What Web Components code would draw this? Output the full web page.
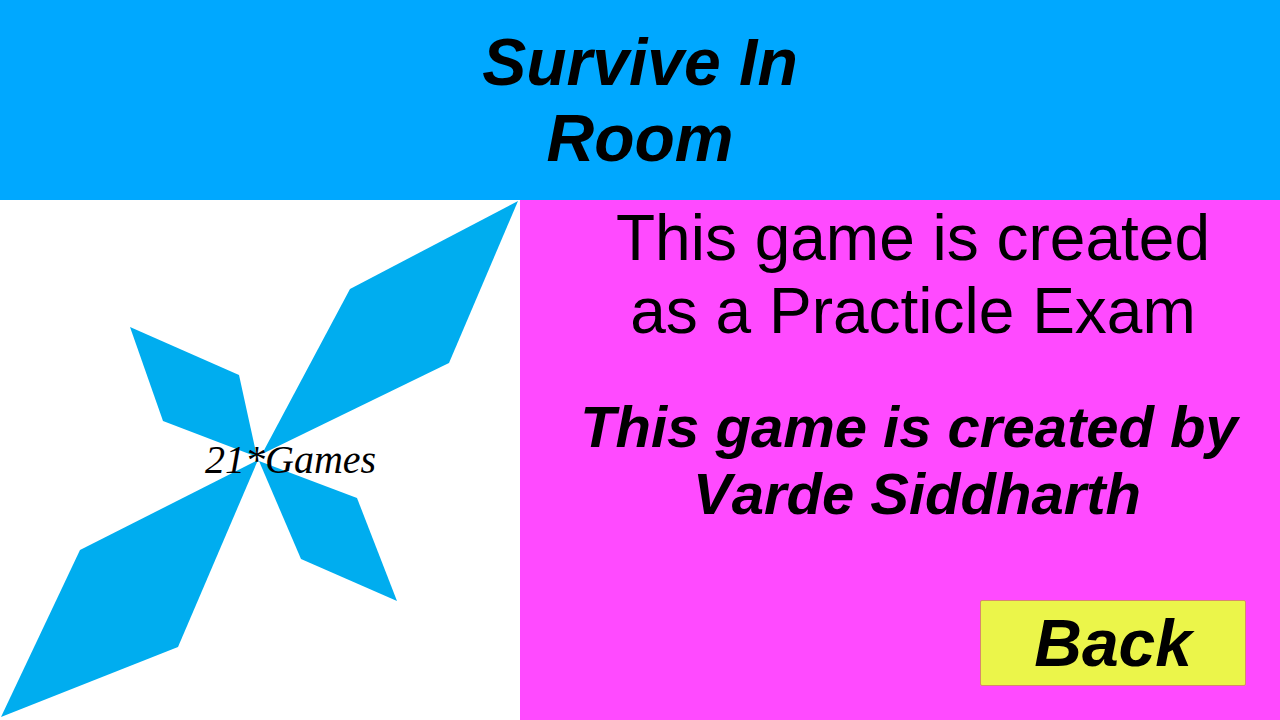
<!DOCTYPE html>
<html lang="en">
<head>
<meta charset="utf-8">
<meta name="viewport" content="width=device-width, initial-scale=1">
<title>Survive In Room</title>
<style>
    body {
        margin: 0;
        background: #ff4aff;
        color: #000;
        font-family: "Liberation Sans", Arial, sans-serif;
        font-kerning: none;
    }
</style>
</head>
<body>
<about-screen>
    <game-header slot="header">Survive In Room</game-header>
    <studio-logo slot="logo"></studio-logo>
    <game-credits slot="credits">
        <span slot="purpose">This game is created as a Practicle Exam</span>
        <span slot="author">This game is created by Varde Siddharth</span>
        <back-button slot="action">Back</back-button>
    </game-credits>
</about-screen>

<script>
function makeTemplate(html) {
    const template = document.createElement("template");
    template.innerHTML = html;
    return template;
}

const screenTemplate = makeTemplate(`
    <style>
    :host {
        display: block;
    }
    main {
        display: grid;
        grid-template-columns: 13fr 19fr;
    }
    </style>
    <slot name="header"></slot>
    <main>
        <slot name="logo"></slot>
        <slot name="credits"></slot>
    </main>
`);

const headerTemplate = makeTemplate(`
    <style>
    :host {
        display: block;
        padding: 24px;
        background: #00a8ff;
    }
    h1 {
        max-width: 400px;
        margin: 0 auto;
        font-size: 66px;
        font-style: italic;
        line-height: 76px;
        text-align: center;
    }
    </style>
    <h1><slot></slot></h1>
`);

const logoTemplate = makeTemplate(`
    <style>
    :host {
        display: block;
        background: #fff;
    }
    svg {
        display: block;
        width: 100%;
    }
    polygon {
        fill: #00adef;
    }
    text {
        font-family: "Lucida Calligraphy", "Liberation Serif", serif;
        font-size: 40px;
        font-style: italic;
    }
    </style>
    <svg viewBox="0 0 520 520" role="img" aria-label="21*Games">
        <polygon points="518,1 350,89 262,254 449,163" />
        <polygon points="130,127 239,175 257,257 163,221" />
        <polygon points="258,260 80,350 1,517 178,447" />
        <polygon points="259,261 357,298 397,401 301,359" />
        <text x="205" y="273">21*Games</text>
    </svg>
`);

const creditsTemplate = makeTemplate(`
    <style>
    :host {
        display: flex;
        flex-direction: column;
        padding: 2px 0 34px;
        background: #ff4aff;
        text-align: center;
    }
    p {
        margin: 0;
    }
    .purpose {
        padding: 0 34px 0 60px;
        font-size: 64px;
        line-height: 73px;
    }
    .author {
        margin-top: 45px;
        padding: 0 20px 0 54px;
        font-size: 58px;
        font-style: italic;
        font-weight: bold;
        line-height: 67px;
        white-space: break-spaces;
    }
    .action {
        display: flex;
        justify-content: flex-end;
        margin-top: auto;
        padding: 0 34px;
    }
    </style>
    <p class="purpose"><slot name="purpose"></slot></p>
    <p class="author"><slot name="author"></slot></p>
    <div class="action"><slot name="action"></slot></div>
`);

const buttonTemplate = makeTemplate(`
    <style>
    :host {
        display: block;
    }
    button {
        display: block;
        padding: 4px 53px;
        border: 1px solid #d68a6c;
        border-radius: 2px;
        background: #ebf54a;
        color: inherit;
        font: italic bold 66px/76px "Liberation Sans", Arial, sans-serif;
        cursor: pointer;
    }
    </style>
    <button type="button"><slot></slot></button>
`);

class AboutScreen extends HTMLElement {
    constructor() {
        super();
        this.attachShadow({ mode: "open" });
        this.shadowRoot.appendChild(screenTemplate.content.cloneNode(true));
    }
}

class GameHeader extends HTMLElement {
    constructor() {
        super();
        this.attachShadow({ mode: "open" });
        this.shadowRoot.appendChild(headerTemplate.content.cloneNode(true));
    }
}

class StudioLogo extends HTMLElement {
    constructor() {
        super();
        this.attachShadow({ mode: "open" });
        this.shadowRoot.appendChild(logoTemplate.content.cloneNode(true));
    }
}

class GameCredits extends HTMLElement {
    constructor() {
        super();
        this.attachShadow({ mode: "open" });
        this.shadowRoot.appendChild(creditsTemplate.content.cloneNode(true));
    }
}

class BackButton extends HTMLElement {
    constructor() {
        super();
        this.attachShadow({ mode: "open" });
        this.shadowRoot.appendChild(buttonTemplate.content.cloneNode(true));
        this.goBack = () => window.history.back();
    }

    connectedCallback() {
        this.shadowRoot.querySelector("button").addEventListener("click", this.goBack);
    }

    disconnectedCallback() {
        this.shadowRoot.querySelector("button").removeEventListener("click", this.goBack);
    }
}

window.customElements.define("about-screen", AboutScreen);
window.customElements.define("game-header", GameHeader);
window.customElements.define("studio-logo", StudioLogo);
window.customElements.define("game-credits", GameCredits);
window.customElements.define("back-button", BackButton);
</script>
</body>
</html>
